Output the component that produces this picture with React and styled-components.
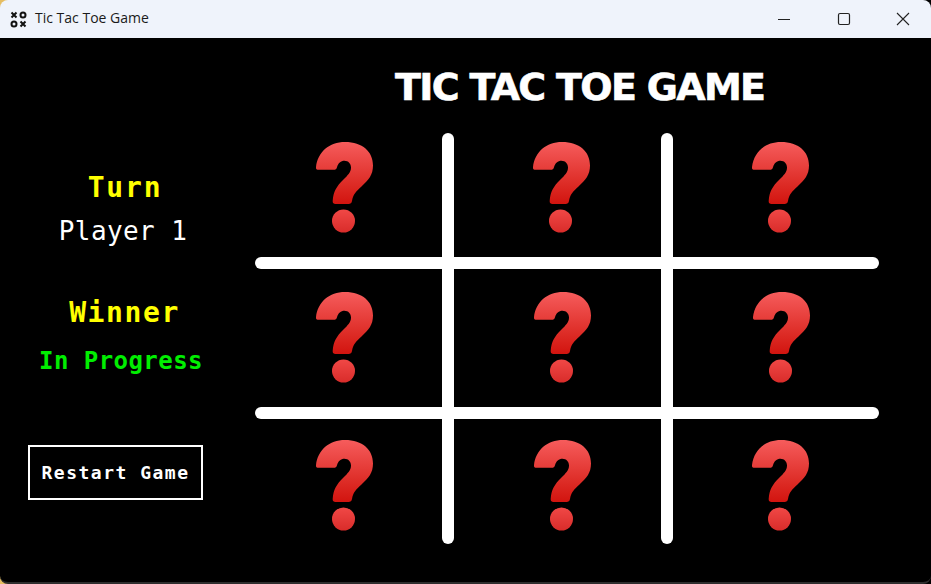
import React from "react";
import styled, { createGlobalStyle } from "styled-components";

const Global = createGlobalStyle`
  html, body { margin: 0; padding: 0; background: #000; }
  #root { width: 931px; height: 584px; overflow: hidden; }
`;

const Win = styled.div`
  width: 931px; height: 584px; display: flex; flex-direction: column;
  background: linear-gradient(to right, #e6bd62 0 12px, #000 12px);
`;
const TitleBar = styled.header`
  height: 38px; flex: none; display: flex; align-items: center; background: #eff3fb;
  border-radius: 8px 8px 0 0; color: #1a1a1a;
`;
const AppIcon = styled.svg`
  width: 17px; height: 17px; margin-left: 10px; margin-right: 8px; flex: none;
`;
const AppName = styled.span`
  flex: 1; font-family: "Open Sans", "Liberation Sans", sans-serif; font-size: 14px; line-height: 20px; position: relative; top: -1px;
`;
const WinButton = styled.div`
  width: ${p => p.$w}px; height: 38px; display: flex; align-items: center; justify-content: center;
  svg { width: 14px; height: 14px; display: block; }
`;
const Body = styled.main`
  flex: 1; display: flex; min-height: 0; background: #000;
  border-bottom: 2px solid #2e2e2e; border-radius: 0 0 8px 8px;
`;
const Side = styled.aside`
  width: 246px; flex: none; display: flex; flex-direction: column; align-items: center;
  padding-top: 132px; box-sizing: border-box;
`;
const Label = styled.div`
  font-family: "DejaVu Sans Mono", "Liberation Mono", monospace;
  font-weight: ${p => p.$bold ? 700 : 400};
  font-size: ${p => p.$size}px; line-height: ${p => p.$lh}px;
  color: ${p => p.$color};
  margin-top: ${p => p.$mt || 0}px;
  margin-right: ${p => p.$mr || 0}px;
  letter-spacing: ${p => p.$ls || 0}px;
  white-space: nowrap;
`;
const Restart = styled.button`
  align-self: flex-start; margin: 68px 0 0 28px; width: 175px; height: 55px; box-sizing: border-box;
  background: #000; border: 2px solid #fff; color: #fff; padding: 0;
  font-family: "DejaVu Sans Mono", "Liberation Mono", monospace; font-weight: 700;
  font-size: 18px; letter-spacing: 1.5px; white-space: nowrap;
`;
const Main = styled.section`
  margin-left: 9px; display: flex; flex-direction: column;
`;
const Title = styled.h1`
  margin: 24px 0 0 140px; width: 372px; height: 71px; font-family: "DejaVu Sans", "Liberation Sans", sans-serif;
  font-weight: 700; font-size: 38px; line-height: 50px; white-space: nowrap;
  letter-spacing: -1.7px; color: #fff; -webkit-text-stroke: 0.6px #fff;
`;
const Board = styled.div`
  display: grid; grid-template-columns: 187px 12px 207px 12px 206px;
  grid-template-rows: 124px 12px 138px 12px 125px;
`;
const VLine = styled.div`
  grid-row: 1 / -1; grid-column: ${p => p.$col}; background: #fff; border-radius: 6px;
`;
const HLine = styled.div`
  grid-column: 1 / -1; grid-row: ${p => p.$row}; background: #fff; border-radius: 6px;
`;
const Cell = styled.div`
  grid-column: ${p => p.$col}; grid-row: ${p => p.$row};
  padding-top: ${p => p.$top}px; padding-left: ${p => p.$left}px;
  svg { display: block; width: 58px; height: 91px; }
`;

const Question = ({ id }) => (
  <svg viewBox="0 0 58 91">
    <defs>
      <linearGradient id={id} x1="0" y1="0" x2="0" y2="1">
        <stop offset="0" stopColor="#f65c5c" />
        <stop offset="0.7" stopColor="#dc2a24" />
        <stop offset="1" stopColor="#d2140f" />
      </linearGradient>
      <linearGradient id={id + "d"} x1="0" y1="0" x2="0" y2="1">
        <stop offset="0" stopColor="#f04846" />
        <stop offset="1" stopColor="#d92c2a" />
      </linearGradient>
    </defs>
    <path
      fill={`url(#${id})`}
      d="M29 0C46.500 0 57 9.500 57 23.500c0 9.500-4.500 14.500-11.500 21-5.500 5-8.500 8-9.500 14.500-.5 2.300-1.500 3-3.500 3H19.500c-2 0-3-1-2.800-3.200.6-9 4-14.700 10.300-20.800 5-4.800 8-8 8-12.500 0-4-2.700-6.800-6.500-6.800-3.700 0-6.300 2.200-7.500 6.500-.5 1.800-1.500 2.600-3.500 2.600H2.500C.7 27.800-.3 26.800 0 25 1.900 9.800 13.200 0 29 0Z"
    />
    <circle cx="27.500" cy="79" r="11.500" fill={`url(#${id}d)`} />
  </svg>
);

const cells = [
  [1, 1, 9, 61], [3, 1, 9, 79], [5, 1, 9, 79],
  [1, 3, 23, 61], [3, 3, 23, 80], [5, 3, 23, 80],
  [1, 5, 21, 61], [3, 5, 21, 80], [5, 5, 21, 79],
];

export default function App() {
  return (
    <Win>
      <Global />
      <TitleBar>
        <AppIcon viewBox="0 0 17 17" fill="none" stroke="#111" strokeWidth="2">
          <path d="M1.500 1.500l5 5M6.500 1.500l-5 5M10.500 10.500l5 5M15.500 10.500l-5 5" />
          <circle cx="13" cy="4" r="2.500" />
          <circle cx="4" cy="13" r="2.500" />
        </AppIcon>
        <AppName>Tic Tac Toe Game</AppName>
        <WinButton $w={58}>
          <svg viewBox="0 0 14 14" fill="none" stroke="#222"><path d="M1 7.500h12" /></svg>
        </WinButton>
        <WinButton $w={62}>
          <svg viewBox="0 0 14 14" fill="none" stroke="#222" strokeWidth="1.200"><rect x="1.500" y="1.500" width="11" height="11" rx="1.500" /></svg>
        </WinButton>
        <WinButton $w={56}>
          <svg viewBox="0 0 14 14" fill="none" stroke="#222" strokeWidth="1.100"><path d="M1 1l12 12M13 1L1 13" /></svg>
        </WinButton>
      </TitleBar>
      <Body>
        <Side>
          <Label $bold $size={28} $lh={36} $ls={1.8} $mr={-4} $color="#ffff00">Turn</Label>
          <Label $size={26} $lh={36} $mt={7} $ls={0.4} $color="#ffffff">Player 1</Label>
          <Label $bold $size={28} $lh={36} $mt={46} $ls={1.6} $mr={-3} $color="#ffff00">Winner</Label>
          <Label $bold $size={24} $lh={32} $mt={14} $ls={0.45} $mr={4} $color="#00ee00">In Progress</Label>
          <Restart>Restart Game</Restart>
        </Side>
        <Main>
          <Title>TIC TAC TOE GAME</Title>
          <Board>
            <VLine $col={2} />
            <VLine $col={4} />
            <HLine $row={2} />
            <HLine $row={4} />
            {cells.map(([c, r, t, l], i) => (
              <Cell key={i} $col={c} $row={r} $top={t} $left={l}>
                <Question id={"q" + i} />
              </Cell>
            ))}
          </Board>
        </Main>
      </Body>
    </Win>
  );
}
